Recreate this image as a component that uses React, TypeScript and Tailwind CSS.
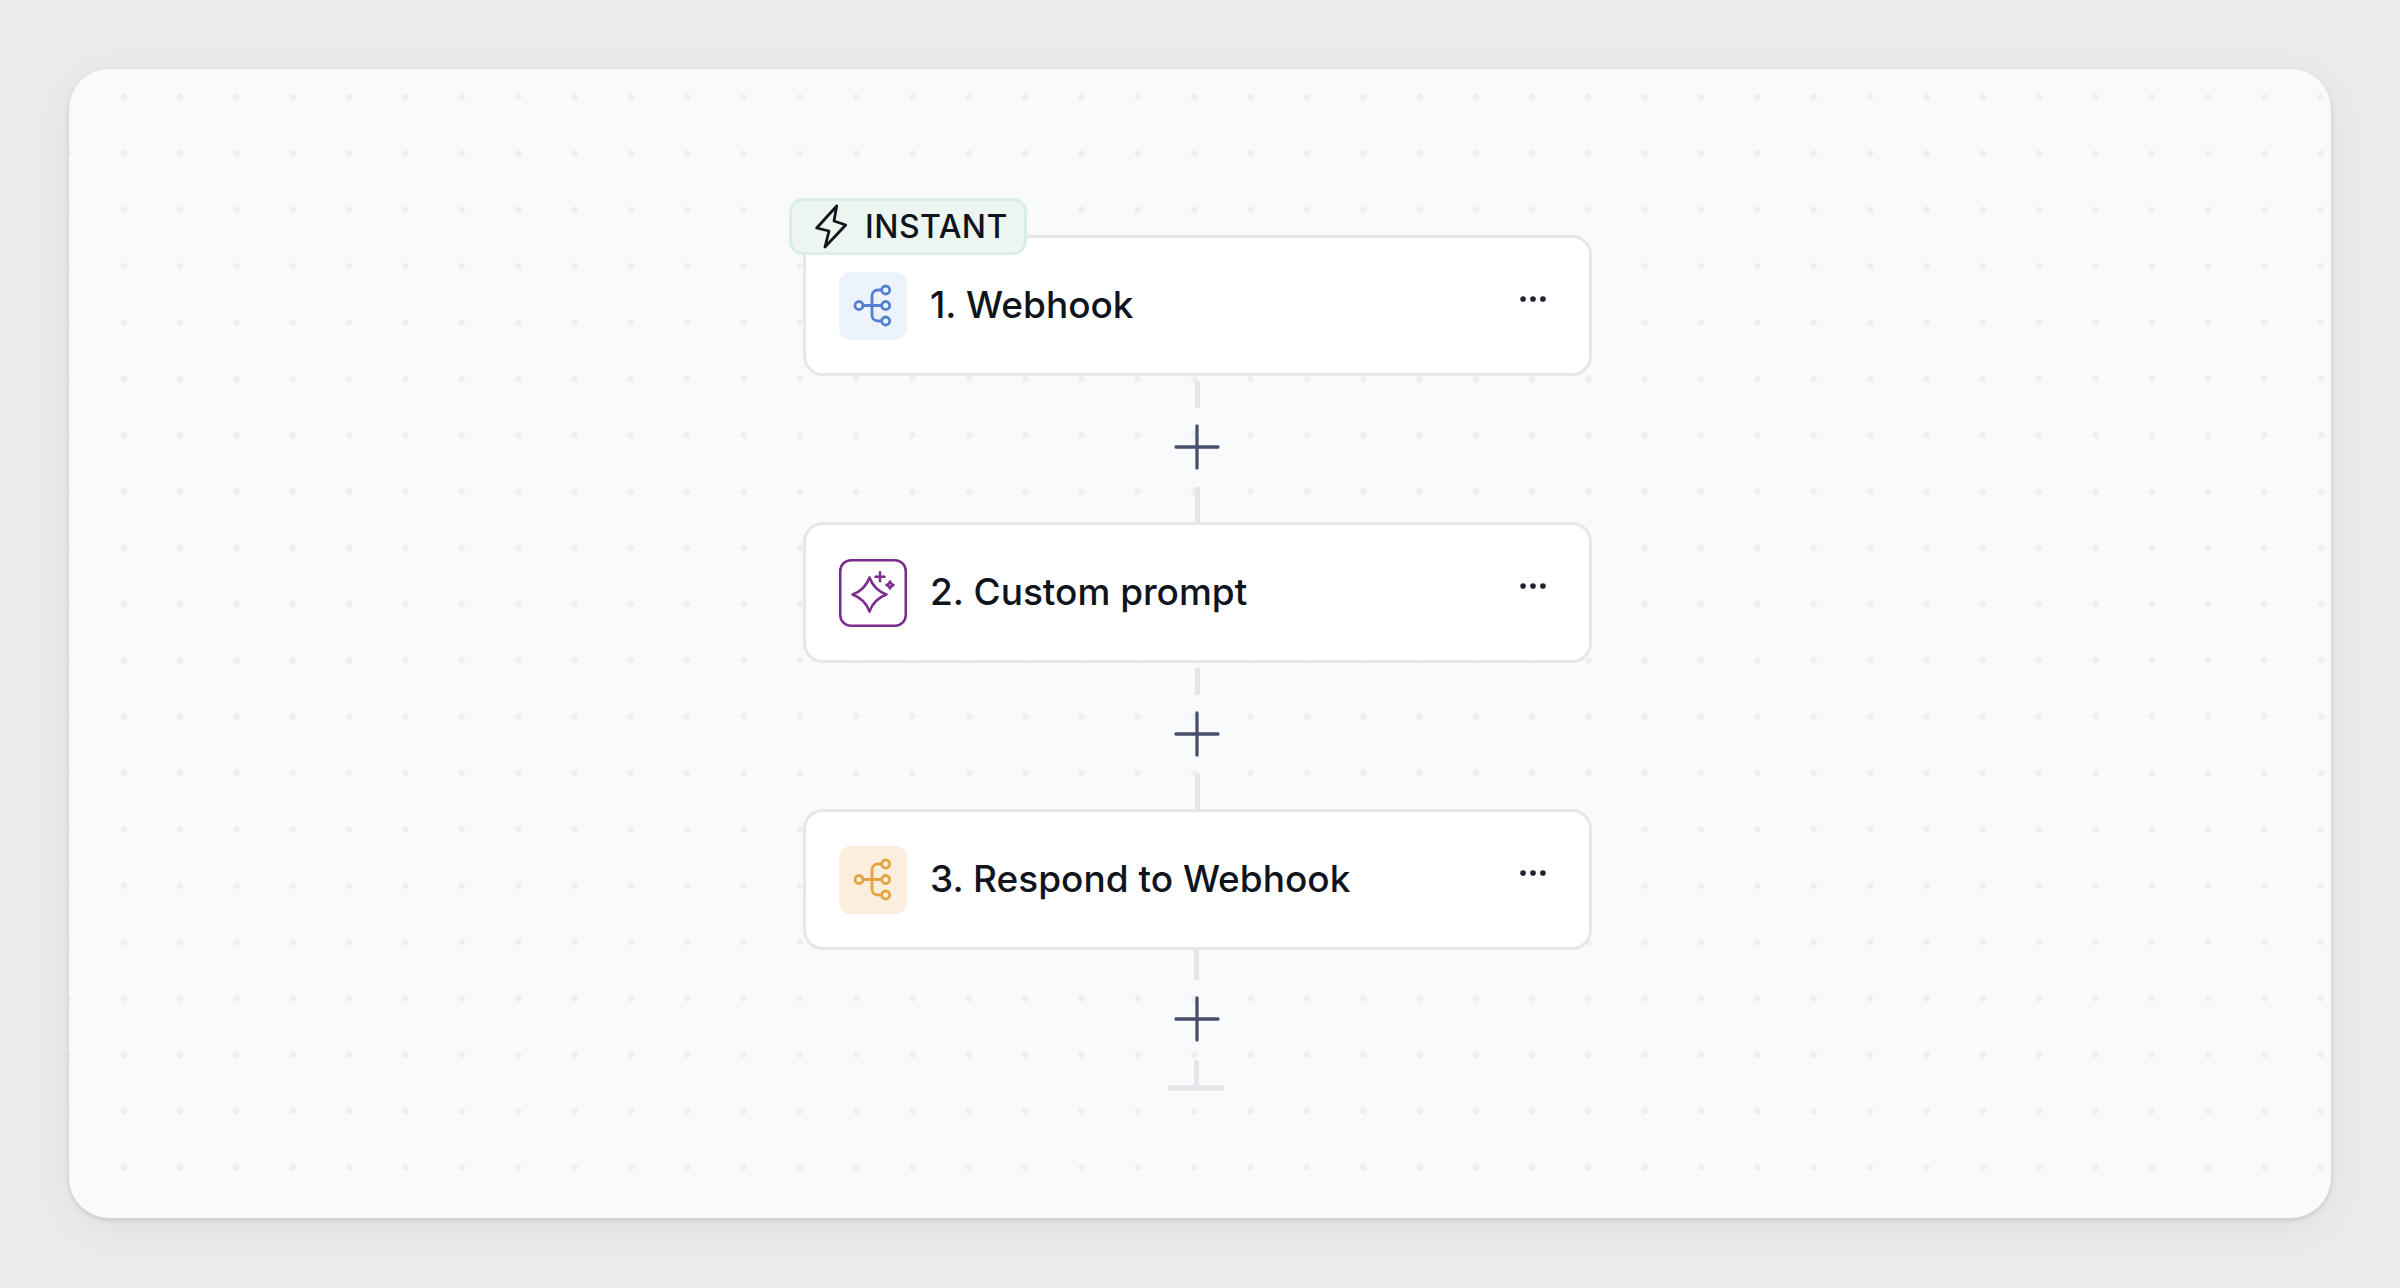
import { Ellipsis, Plus } from "lucide-react";

type Step = {
    title: string;
    tile: string;
    icon: React.ReactNode;
};

// branching node icon, drawn on the 68px tile
function BranchIcon({ className }: { className: string }) {
    return (
        <svg viewBox="0 0 68 68" className={`w-[68px] h-[68px] ${className}`} fill="none" stroke="currentColor" strokeWidth="2.8" strokeLinecap="round">
            <circle cx="20" cy="33.5" r="4" />
            <circle cx="46.7" cy="18" r="4" />
            <circle cx="46.7" cy="33.5" r="4" />
            <circle cx="46.7" cy="49" r="4" />
            <path d="M24 33.5H42.7" />
            <path d="M42.7 18H39C35.500 18 33 20.500 33 24V43C33 46.500 35.500 49 39 49H42.7" />
        </svg>
    );
}

function SparkIcon() {
    return (
        <svg viewBox="0 0 68 68" className="w-[68px] h-[68px] text-[#7b2d8e]" fill="none" stroke="currentColor" strokeWidth="2.5" strokeLinejoin="round" strokeLinecap="round">
            <path d="M30.500 18.500Q35 31 47.500 35.500Q35 40 30.500 52.500Q26 40 13.500 35.500Q26 31 30.500 18.500Z" />
            <path d="M41 13.200V22.200M36.500 17.700H45.500" />
            <path d="M51 22.500Q51.800 25.200 54.500 26Q51.800 26.800 51 29.500Q50.200 26.800 47.500 26Q50.200 25.200 51 22.500Z" />
        </svg>
    );
}

const STEPS: Step[] = [
    {
        title: "1. Webhook",
        tile: "bg-[#edf3fb]",
        icon: <BranchIcon className="text-[#5580d2]" />,
    },
    {
        title: "2. Custom prompt",
        tile: "bg-white shadow-[inset_0_0_0_2.5px_#7b2d8e]",
        icon: <SparkIcon />,
    },
    {
        title: "3. Respond to Webhook",
        tile: "bg-[#fbeedc]",
        icon: <BranchIcon className="text-[#e4a441]" />,
    },
];

function Dash({ height }: { height: string }) {
    return <div className={`w-[5px] bg-[#e5e5ea] ${height}`} />;
}

function AddButton() {
    return <Plus size={72} strokeWidth={1.1} className="text-[#475069] shrink-0" />;
}

function Connector() {
    return (
        <div className="h-[146px] shrink-0 flex flex-col items-center pr-[1px]">
            <div className="h-[5px]" />
            <Dash height="h-[27px]" />
            <div className="h-[3px]" />
            <AddButton />
            <div className="h-[4px]" />
            <Dash height="h-[35px]" />
        </div>
    );
}

function StepCard({ step, badge }: { step: Step; badge?: boolean }) {
    return (
        <div className="relative w-[789px] h-[141px] shrink-0 bg-white border-[3px] border-[#e6e6eb] rounded-[20px] pl-[33px] pr-[39px] flex items-center gap-[23px]">
            {badge && (
                <div className="absolute left-[-17px] top-[-40px] w-[238px] h-[57px] bg-[#edf5f1] border-[3px] border-[#d9eee5] rounded-[14px] flex items-center pl-[23px] gap-[18px]">
                    <svg viewBox="0 0 32 46" className="w-[32px] h-[46px] text-[#10141c]" fill="none" stroke="currentColor" strokeWidth="2.8" strokeLinejoin="round">
                        <path d="M21.700 2L1.700 24L14 27L10 43L30.700 21L19 17Z" />
                    </svg>
                    <span className="text-[32px] leading-none font-medium tracking-[0.015em] text-[#10141c]">INSTANT</span>
                </div>
            )}
            <div className={`w-[68px] h-[68px] rounded-[12px] flex items-center justify-center shrink-0 ${step.tile}`}>
                {step.icon}
            </div>
            <div className="text-[37px] font-medium text-[#10141c] flex-1 mt-[-2px]">{step.title}</div>
            <Ellipsis size={34} strokeWidth={2} className="text-[#1f2433] mt-[-14px]" />
        </div>
    );
}

export default function App() {
    return (
        <div className="w-full h-screen bg-[#ebebeb] pt-[69px] pl-[69px] pr-[69px] pb-[70px] font-['Inter',sans-serif]">
            <div className="h-full rounded-[40px] bg-[#f9fafc] shadow-[0_10px_40px_rgba(0,0,0,0.05),0_2px_5px_rgba(0,0,0,0.12)] bg-[radial-gradient(circle,#efeff1_3px,transparent_3.5px)] bg-[size:56.33px_56.33px] bg-[position:26.8px_0px] flex flex-col items-center pt-[166px] pr-[5px]">
                <StepCard step={STEPS[0]} badge />
                <Connector />
                <StepCard step={STEPS[1]} />
                <Connector />
                <StepCard step={STEPS[2]} />
                <div className="shrink-0 flex flex-col items-center pr-[1px]">
                    <div className="mr-[2px]">
                        <Dash height="h-[30px]" />
                    </div>
                    <div className="h-[3px]" />
                    <AddButton />
                    <div className="h-[5px]" />
                    <div className="flex flex-col items-center mr-[2px]">
                        <Dash height="h-[25px]" />
                        <div className="w-[56px] h-[6px] bg-[#e5e5ea]" />
                    </div>
                </div>
            </div>
        </div>
    );
}
